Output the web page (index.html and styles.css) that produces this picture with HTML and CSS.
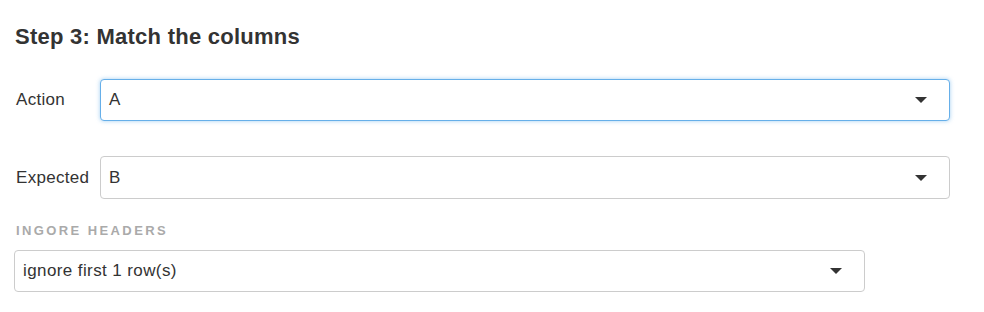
FILE: index.html
```html
<!DOCTYPE html>
<html lang="en">
<head>
  <meta charset="UTF-8">
  <meta name="viewport" content="width=device-width, initial-scale=1.0">
  <title>Import - Match the columns</title>
  <link rel="stylesheet" href="styles.css">
</head>
<body>
  <div class="step">
    <h2>Step 3: Match the columns</h2>

    <div class="field-row">
      <label class="field-label">Action</label>
      <div class="select focused">
        <span class="select-value">A</span>
        <svg class="caret" width="12" height="6" viewBox="0 0 12 6"><path d="M0 0h12L6 6z"/></svg>
      </div>
    </div>

    <div class="field-row">
      <label class="field-label">Expected</label>
      <div class="select">
        <span class="select-value">B</span>
        <svg class="caret" width="12" height="6" viewBox="0 0 12 6"><path d="M0 0h12L6 6z"/></svg>
      </div>
    </div>

    <div class="headers">
      <div class="section-label">Ingore headers</div>
      <div class="select wide">
        <span class="select-value">ignore first 1 row(s)</span>
        <svg class="caret" width="12" height="6" viewBox="0 0 12 6"><path d="M0 0h12L6 6z"/></svg>
      </div>
    </div>
  </div>
</body>
</html>
```

FILE: styles.css
```css
body {
  margin: 0;
  font-family: "Liberation Sans", Arial, sans-serif;
  color: #333;
  background: #fff;
}
.step {
  padding: 24px 0 0 15px;
}
h2 {
  margin: 0 0 29px;
  font-size: 22px;
  line-height: 26px;
  font-weight: bold;
  letter-spacing: 0.25px;
}
.field-row {
  display: flex;
  align-items: center;
  margin-bottom: 35px;
}
.field-row:nth-of-type(2) {
  margin-bottom: 24px;
}
.field-label {
  width: 85px;
  font-size: 17px;
  letter-spacing: 0.3px;
  padding-left: 1px;
  box-sizing: border-box;
}
.select {
  display: flex;
  align-items: center;
  justify-content: space-between;
  width: 850px;
  height: 42px;
  box-sizing: border-box;
  padding: 0 22px 0 8px;
  border: 1px solid #ccc;
  border-radius: 4px;
  font-size: 17px;
  letter-spacing: 0.4px;
  background: #fff;
}
.field-row:nth-of-type(2) .select {
  height: 43px;
}
.select.focused {
  border-color: #66afe9;
  box-shadow: 0 0 4px rgba(102, 175, 233, 0.6);
}
.caret {
  fill: #333;
}
.section-label {
  font-size: 13px;
  line-height: 16px;
  font-weight: bold;
  letter-spacing: 2.4px;
  text-transform: uppercase;
  color: #aaa;
  padding-left: 1px;
  margin-bottom: 11px;
}
.select.wide {
  width: 851px;
  margin-left: -1px;
}
```
